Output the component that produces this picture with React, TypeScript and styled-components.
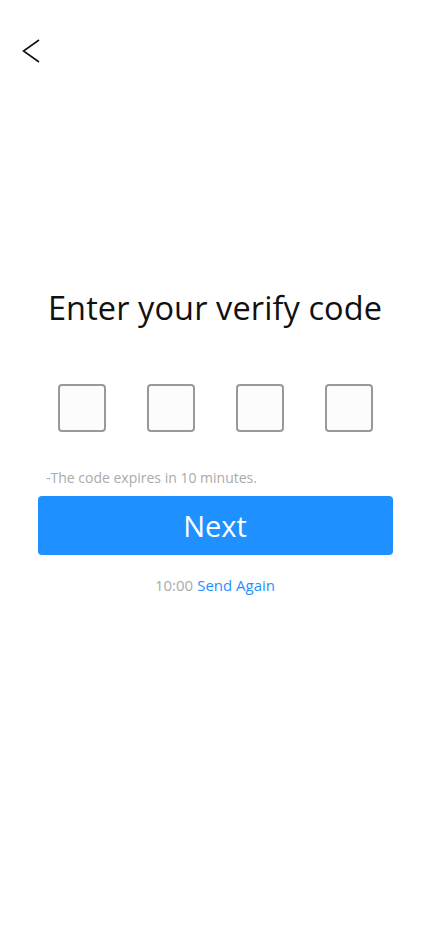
import styled, { createGlobalStyle } from 'styled-components';

const GlobalStyle = createGlobalStyle`
  html, body {
    margin: 0;
    padding: 0;
    background: #fff;
  }
  body {
    font-family: "Open Sans", "Noto Sans", "Liberation Sans", sans-serif;
  }
`;

const Screen = styled.div`
  width: 430px;
  min-height: 932px;
  display: flex;
  flex-direction: column;
  background: #fff;
`;

const TopBar = styled.div`
  height: 100px;
  padding: 39px 0 0 22px;
  box-sizing: border-box;
`;

const BackButton = styled.button`
  border: 0;
  background: none;
  padding: 0;
  width: 18px;
  height: 24px;
  cursor: pointer;
  display: flex;
  align-items: center;
  justify-content: center;
`;

const Content = styled.div`
  display: flex;
  flex-direction: column;
  align-items: center;
  padding-top: 184px;
`;

const Title = styled.h1`
  margin: 0;
  font-size: 32.5px;
  font-weight: 400;
  color: #111;
  letter-spacing: 0.1px;
  line-height: 48px;
`;

const CodeRow = styled.div`
  display: flex;
  gap: 41px;
  margin-top: 52px;
`;

const CodeBox = styled.input`
  width: 48px;
  height: 48px;
  box-sizing: border-box;
  border: 2px solid #999;
  border-radius: 4px;
  background: #fcfcfc;
  font-size: 24px;
  text-align: center;
  outline: none;
`;

const Hint = styled.p`
  align-self: flex-start;
  margin: 36px 0 0 46px;
  font-size: 14px;
  color: #aaa;
  line-height: 20px;
`;

const NextButton = styled.button`
  margin-top: 8px;
  width: 355px;
  height: 59px;
  border: 0;
  border-radius: 4px;
  background: #1e90ff;
  color: #fff;
  font-family: inherit;
  font-size: 29px;
  font-weight: 400;
  cursor: pointer;
`;

const Resend = styled.div`
  margin-top: 20px;
  font-size: 15px;
  line-height: 20px;
  display: flex;
  gap: 4px;
`;

const Timer = styled.span`
  color: #aaa;
`;

const SendLink = styled.a`
  color: #1e90ff;
  text-decoration: none;
  cursor: pointer;
`;

export default function App() {
  return (
    <Screen>
      <GlobalStyle />
      <TopBar>
        <BackButton aria-label="Back">
          <svg width="18" height="24" viewBox="0 0 18 24" fill="none">
            <path d="M17 1 L1.5 12 L17 23" stroke="#111" strokeWidth="1.6" />
          </svg>
        </BackButton>
      </TopBar>
      <Content>
        <Title>Enter your verify code</Title>
        <CodeRow>
          {[0, 1, 2, 3].map((i) => (
            <CodeBox key={i} maxLength={1} inputMode="numeric" />
          ))}
        </CodeRow>
        <Hint>-The code expires in 10 minutes.</Hint>
        <NextButton>Next</NextButton>
        <Resend>
          <Timer>10:00</Timer>
          <SendLink>Send Again</SendLink>
        </Resend>
      </Content>
    </Screen>
  );
}
